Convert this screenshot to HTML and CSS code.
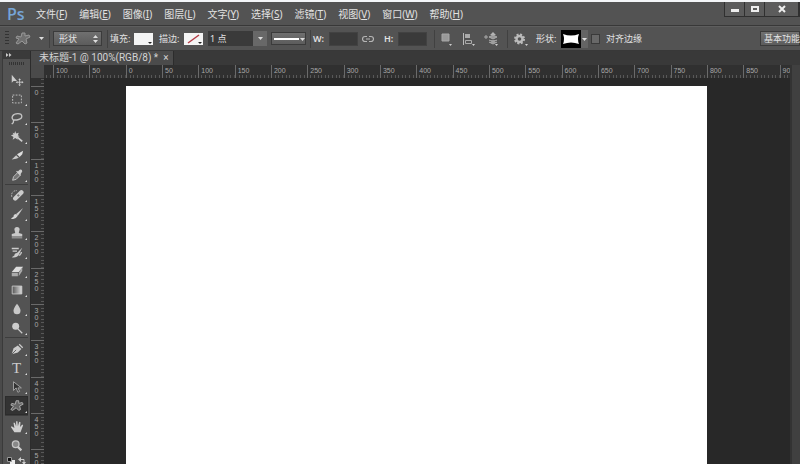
FILE: index.html
```html
<!DOCTYPE html>
<html lang="zh-CN">
<head>
<meta charset="utf-8">
<title>未标题-1</title>
<link rel="stylesheet" href="styles.css">
</head>
<body>
<header class="menubar">
  <span class="logo">Ps</span>
  <nav class="menus">
    <a href="#">文件(<u>F</u>)</a>
    <a href="#">编辑(<u>E</u>)</a>
    <a href="#">图像(<u>I</u>)</a>
    <a href="#">图层(<u>L</u>)</a>
    <a href="#">文字(<u>Y</u>)</a>
    <a href="#">选择(<u>S</u>)</a>
    <a href="#">滤镜(<u>T</u>)</a>
    <a href="#">视图(<u>V</u>)</a>
    <a href="#">窗口(<u>W</u>)</a>
    <a href="#">帮助(<u>H</u>)</a>
  </nav>
  <div class="window-buttons">
    <button aria-label="最小化"><svg width="10" height="8"><path d="M1 4h8v3H1z" fill="#eee"/></svg></button>
    <button aria-label="最大化"><svg width="10" height="8"><path d="M2 2h6v4H2z" fill="none" stroke="#eee" stroke-width="2"/></svg></button>
    <button class="close" aria-label="关闭"><svg width="10" height="8"><path d="M2 1l6 6M8 1L2 7" stroke="#eee" stroke-width="2"/></svg></button>
  </div>
</header>

<section class="options">
  <span class="grip"></span>
  <button class="plain" aria-label="自定形状工具"><svg width="16" height="16" viewBox="0 0 16 16"><path d="M2 5l4 1 1-4 3 0 0 3 4-1 1 2-4 2 1 4-2 1-3-3-4 3-2-1 3-4-3-1z" fill="#707070" stroke="#989898"/></svg></button>
  <button class="plain" aria-label="工具预设"><svg width="5" height="3"><path d="M0 0h5L2.500 3z" fill="#ddd"/></svg></button>
  <span class="divider"></span>
  <div class="mode">
    <select aria-label="工具模式"><option>形状</option></select>
    <svg width="5" height="8"><path d="M0 3h5L2.500 0zM0 5h5L2.500 8z" fill="#ddd"/></svg>
  </div>
  <span class="divider"></span>
  <span>填充:</span>
  <button class="swatch" aria-label="填充"><svg width="19" height="12"><path d="M14 9h4l-2 2z" fill="#222"/></svg></button>
  <span>描边:</span>
  <button class="swatch" aria-label="描边"><svg width="19" height="12"><path d="M4 10L15 2" stroke="#b43c46" stroke-width="1.500"/><path d="M14 9h4l-2 2z" fill="#222"/></svg></button>
  <div class="stroke-size">
    <input aria-label="描边宽度" value="1 点">
    <button aria-label="选择宽度"><svg width="5" height="3"><path d="M0 0h5L2.500 3z" fill="#ddd"/></svg></button>
  </div>
  <button class="raised" aria-label="描边类型"><svg width="32" height="8"><path d="M1 4h25" stroke="#fff" stroke-width="2"/><path d="M27 3h5l-2.500 3z" fill="#ddd"/></svg></button>
  <span class="divider"></span>
  <label class="size-label" for="w">W:</label>
  <input class="size" id="w">
  <button class="plain" aria-label="链接宽高"><svg width="12" height="8" viewBox="0 0 12 8"><path d="M5 1.500H3a2.500 2.500 0 0 0 0 5h2M7 1.500h2a2.500 2.500 0 0 1 0 5H7M4 4h4" fill="none" stroke="#b5b5b5" stroke-width="1.200"/></svg></button>
  <label class="size-label" for="h">H:</label>
  <input class="size" id="h">
  <span class="divider"></span>
  <button class="plain" aria-label="路径操作"><svg width="16" height="16"><path d="M3 3h7v7H3z" fill="#999" stroke="#a8a8a8"/><path d="M10 13h3l-1.500 2z" fill="#ccc"/></svg></button>
  <button class="plain" aria-label="路径对齐方式"><svg width="16" height="16"><path d="M2.500 2v12" stroke="#bbb"/><path d="M4 3h5v4H4z" fill="#aaa"/><path d="M4.500 9.500h6v3h-6z" fill="none" stroke="#aaa"/><path d="M11 13h3l-1.500 2z" fill="#ccc"/></svg></button>
  <button class="plain" aria-label="路径排列方式"><svg width="16" height="16"><path d="M1 6h4M3 4v4" stroke="#aaa"/><path d="M10 1l3 3h-2v2H9V4H7z" fill="#b5b5b5"/><path d="M6 6l4-2 4 2-4 2zM6 9l4 2 4-2M6 11l4 2 4-2" fill="#999" stroke="#aaa"/><path d="M12 13h3l-1.500 2z" fill="#ccc"/></svg></button>
  <span class="divider"></span>
  <button class="plain" aria-label="设置"><svg width="16" height="16" viewBox="0 0 16 16"><circle cx="7.500" cy="8" r="4.500" fill="none" stroke="#bbb" stroke-width="2" stroke-dasharray="2 1.534"/><circle cx="7.500" cy="8" r="3" fill="none" stroke="#bbb" stroke-width="2.400"/><path d="M13 13h3l-1.500 2z" fill="#ccc"/></svg></button>
  <span>形状:</span>
  <button class="shape-picker" aria-label="选择形状"><svg width="20" height="18"><path d="M0 0h20v18H0z" fill="#000"/><path d="M2 4q8 3 16 0-2 5 0 10-8-3-16 0 2-5 0-10z" fill="#fff"/></svg><svg width="7" height="18"><path d="M1 8h5l-2.500 3z" fill="#ddd"/></svg></button>
  <input type="checkbox" id="align">
  <label for="align">对齐边缘</label>
  <button class="raised workspace-name">基本功能</button>
</section>

<main class="workspace">
  <aside class="tools">
    <div class="tools-head"><svg width="6" height="4"><path d="M0 0l2.500 2L0 4zM3 0l2.500 2L3 4z" fill="#ccc"/></svg></div>
    <div class="tools-panel">
      <span class="tools-grip"></span>
      <button class="tool single" aria-label="移动"><svg viewBox="0 0 16 16"><path d="M2 2v9l2-2h4z" fill="#ccc"/><path d="M8 10.500h6M11 7.500v6" stroke="#ccc"/><path d="M11 6l1.500 2h-3zM11 15l1.500-2h-3zM6.500 10.500l2-1.500v3zM15.500 10.500l-2-1.500v3z" fill="#ccc"/></svg></button>
      <button class="tool" aria-label="选框"><svg viewBox="0 0 16 16"><path d="M3 3.500h10v9H3z" fill="none" stroke="#ccc" stroke-dasharray="2 1.500"/></svg></button>
      <button class="tool" aria-label="套索"><svg viewBox="0 0 16 16"><path d="M5 11C0 8 3 3 9 3c6 0 6 6 0 7-4 1-6-1-5 2 0 2-1 2-2 3" fill="none" stroke="#c5c5c5" stroke-width="1.500"/></svg></button>
      <button class="tool" aria-label="魔棒"><svg viewBox="0 0 16 16"><path d="M8 8l6 5" stroke="#ccc" stroke-width="2"/><path d="M6 1l1 3 3-1-1 3 2 1-3 1 1 3-3-2-3 2 1-3-3-2 3-1-1-2 2 1z" fill="#ccc"/></svg></button>
      <button class="tool" aria-label="切片"><svg viewBox="0 0 16 16"><path d="M2 12l5-5 3 3-3 1z" fill="#c8c8c8"/><path d="M8 6l7-4-1 4-3 3z" fill="#ddd"/></svg></button>
      <button class="tool" aria-label="吸管"><svg viewBox="0 0 16 16"><path d="M3 14l1-4 5-5 3 3-5 5z" fill="#777" stroke="#ccc"/><path d="M8 3l1 1 2-2q3-1 3 2l-2 3 0 2-5-5z" fill="#ccc"/></svg></button>
      <hr>
      <button class="tool" aria-label="修复画笔"><svg viewBox="0 0 16 16"><path d="M6 12l7-7" stroke="#ccc" stroke-width="5" stroke-linecap="round"/><path d="M8 8.500h3M9.500 7v3" stroke="#777"/><path d="M2 10q-1-7 6-7" fill="none" stroke="#ccc" stroke-dasharray="1.500 1"/></svg></button>
      <button class="tool" aria-label="画笔"><svg viewBox="0 0 16 16"><path d="M15 1L7 8l2 2z" fill="#ccc"/><path d="M7 8q-3 0-3 3l-3 2q5 2 8-3z" fill="#d5d5d5"/></svg></button>
      <button class="tool" aria-label="仿制图章"><svg viewBox="0 0 16 16"><path d="M6 8L5 4q0-3 3-3t3 3l-1 4 4 1v3H2V9zM2 13h12v1H2z" fill="#c8c8c8"/></svg></button>
      <button class="tool" aria-label="历史记录画笔"><svg viewBox="0 0 16 16"><path d="M14 3L8 9q-3 0-3 3l-3 2q6 1 8-3z" fill="#ccc"/><path d="M2 4h8M3 7h5M10 12q3-1 3-4" fill="none" stroke="#ccc" stroke-width="1.500"/></svg></button>
      <button class="tool" aria-label="橡皮擦"><svg viewBox="0 0 16 16"><path d="M2 9l5-6h8l-5 6z" fill="#ddd"/><path d="M2 10h7v4H2zM10 10l4-6v4l-4 6z" fill="#aaa"/></svg></button>
      <button class="tool" aria-label="渐变"><svg viewBox="0 0 16 16"><defs><linearGradient id="fade"><stop stop-color="#555"/><stop offset="1" stop-color="#ddd"/></linearGradient></defs><path d="M2.500 3.500h11v9h-11z" fill="url(#fade)" stroke="#ccc"/></svg></button>
      <button class="tool" aria-label="模糊"><svg viewBox="0 0 16 16"><path d="M8 2q4 5 4 8a4 4 0 0 1-8 0q0-3 4-8z" fill="#c8c8c8"/></svg></button>
      <button class="tool" aria-label="减淡"><svg viewBox="0 0 16 16"><circle cx="6.500" cy="6" r="4" fill="#ccc"/><path d="M9 9l5 5" stroke="#ccc" stroke-width="1.500"/></svg></button>
      <hr class="wide">
      <button class="tool" aria-label="钢笔"><svg viewBox="0 0 16 16"><path d="M2 14L4 7l5-3 4 4-4 4z" fill="#ccc"/><path d="M2 14l5-5" stroke="#555"/><path d="M10 3l1-1 4 4-1 1z" fill="#ccc"/></svg></button>
      <button class="tool type" aria-label="文字">T</button>
      <button class="tool" aria-label="路径选择"><svg viewBox="0 0 16 16"><path d="M4 2v10l3-3 2 5 2-1-2-4h4z" fill="#333" stroke="#aaa"/></svg></button>
      <button class="tool active" aria-label="自定形状"><svg viewBox="0 0 16 16"><path d="M2 5l4 1 1-4 3 0 0 3 4-1 1 2-4 2 1 4-2 1-3-3-4 3-2-1 3-4-3-1z" fill="#666" stroke="#b5b5b5"/></svg></button>
      <hr class="wide">
      <button class="tool" aria-label="抓手"><svg viewBox="0 0 16 16"><path d="M5 14L1 8l1-1 3 2-1-6 1.500 0L7 7V1.500h1.500L9 7l1.500-5 1.500.5L11.500 8 14 5l1 1-3 8z" fill="#d0d0d0"/></svg></button>
      <button class="tool single" aria-label="缩放"><svg viewBox="0 0 16 16"><circle cx="6.500" cy="6" r="3.800" fill="#888" stroke="#c5c5c5" stroke-width="1.500"/><path d="M9 9l4 4" stroke="#ccc" stroke-width="2.500"/></svg></button>
      <div class="color-modes">
        <button aria-label="默认颜色"><svg width="8" height="8"><path d="M3 3h5v5H3z" fill="#eee"/><path d="M.5.5h4v4h-4z" fill="#111" stroke="#999"/></svg></button>
        <button aria-label="切换颜色"><svg width="8" height="8"><path d="M2 2.500h4v4" fill="none" stroke="#ccc"/><path d="M3 0v5L0 2.500zM4 5h4L6 8z" fill="#ccc"/></svg></button>
      </div>
    </div>
  </aside>

  <section class="document">
    <div class="tabs"><div class="tab"><span>未标题-1 @ 100%(RGB/8) *</span><button aria-label="关闭文档">×</button></div></div>
    <div class="view">
      <div class="corner"></div>
      <div class="ruler across">
        <span></span><span>100</span><span>50</span><span>0</span><span>50</span><span>100</span><span>150</span><span>200</span><span>250</span><span>300</span><span>350</span><span>400</span><span>450</span><span>500</span><span>550</span><span>600</span><span>650</span><span>700</span><span>750</span><span>800</span><span>850</span><span>900</span>
      </div>
      <div class="scrollbar"></div>
      <div class="ruler down">
        <span></span><span>0</span><span>50</span><span>100</span><span>150</span><span>200</span><span>250</span><span>300</span><span>350</span><span>400</span><span>450</span><span>50</span>
      </div>
      <div class="stage"><div class="artboard"></div></div>
    </div>
  </section>
</main>
</body>
</html>
```
FILE: styles.css
```css
:root {
  --unit: calc(109px / 3);
  --minor: calc(109px / 30);
  --panel: #535353;
  --edge: #383838;
  --tick: #585858;
}

* { box-sizing: border-box; }

body {
  margin: 0;
  height: 100vh;
  display: flex;
  flex-direction: column;
  overflow: hidden;
  border-top: 2px solid #f4f6f8;
  background: #282828;
  color: #e2e2e2;
  font: 9px/12px "Noto Sans", "Noto Sans CJK SC", sans-serif;
}

button, input, select {
  margin: 0;
  padding: 0;
  border: 0;
  border-radius: 0;
  background: none;
  color: inherit;
  font: inherit;
}

button {
  display: flex;
  align-items: center;
  justify-content: center;
}

svg { display: block; flex: none; }

/* Menu bar */
.menubar {
  flex: none;
  display: flex;
  align-items: center;
  height: 24px;
  padding-left: 7px;
  background: var(--panel);
  border-bottom: 1px solid var(--edge);
}

.logo {
  width: 29px;
  color: #76a5d8;
  font: 600 16px/20px "Open Sans", sans-serif;
}

.menus {
  display: flex;
  gap: 12px;
  font-size: 10px;
  white-space: nowrap;
}

.menus a { color: #e2e2e2; text-decoration: none; }

.window-buttons {
  display: flex;
  align-self: flex-start;
  margin-left: auto;
  border: 1px solid #303030;
  border-top: 0;
}

.window-buttons button {
  width: 20px;
  height: 14px;
  background: #5c5c5c;
  border-right: 1px solid #303030;
}

.window-buttons .close { width: 34px; }

/* Options bar */
.options {
  flex: none;
  display: grid;
  grid-template-columns:
    12px 20px 12px 6px 52px 5px
    24px 25px 25px 24px 63px 37px 5px
    16px 33px 22px 14px 34px 7px
    22px 22px 22px 7px
    24px 25px 30px 15px 1fr 52px;
  align-items: center;
  height: 25px;
  padding-left: 3px;
  background: var(--panel);
  border-top: 1px solid #5e5e5e;
  border-bottom: 1px solid var(--edge);
  white-space: nowrap;
}

.grip {
  width: 4px;
  height: 15px;
  margin-left: 2px;
  background: repeating-linear-gradient(#333 0 1px, transparent 1px 3px);
}

.divider {
  width: 1px;
  height: 18px;
  margin-left: 2px;
  background: #414141;
}

.plain { justify-self: start; min-width: 12px; }

.mode {
  display: flex;
  align-items: center;
  justify-content: space-between;
  width: 49px;
  height: 15px;
  padding: 0 3px 0 5px;
  border: 1px solid #3b3b3b;
  background: linear-gradient(#707070, #5c5c5c);
}

.mode select { appearance: none; width: 30px; }

.swatch {
  width: 19px;
  height: 12px;
  background: #f4f4f4;
}

.stroke-size { display: flex; width: 59px; height: 15px; }

.stroke-size input {
  width: 45px;
  padding-left: 2px;
  background: #3a3a3a;
}

.stroke-size button { width: 14px; background: #686868; }

.raised {
  width: 35px;
  height: 13px;
  border: 1px solid #3b3b3b;
  background: linear-gradient(#707070, #5c5c5c);
}

.size-label { font-weight: 600; }

.size {
  width: 29px;
  height: 14px;
  background: #3a3a3a;
  border: 1px solid #424242;
}

.shape-picker { width: 27px; background: #646464; }

.options input[type="checkbox"] {
  appearance: none;
  width: 9px;
  height: 10px;
  border: 1px solid #3a3a3a;
  background: #686868;
}

.workspace-name {
  justify-content: flex-start;
  width: auto;
  height: 15px;
  margin-left: 12px;
  padding-left: 3px;
}

/* Workspace */
.workspace {
  flex: 1;
  min-height: 0;
  display: flex;
}

.tools {
  flex: none;
  width: 31px;
  border-left: 2px solid #4a4a4a;
  border-right: 1px solid #2c2c2c;
  background: #3a3a3a;
}

.tools-head { height: 8px; padding: 2px 4px; }

.tools-panel {
  display: flex;
  flex-direction: column;
  margin-left: 1px;
  padding: 0 2px;
  background: var(--panel);
}

.tools-grip {
  height: 3px;
  margin: 3px 4px 5px;
  background: repeating-linear-gradient(90deg, #333 0 1px, transparent 1px 2px);
}

.tools hr {
  width: 100%;
  height: 1px;
  margin: 0;
  border: 0;
  background: #3d3d3d;
}

.tools hr.wide { margin-bottom: 1px; }

.tool {
  position: relative;
  height: 19px;
}

.tool svg { width: 14px; height: 14px; }

.tool::after {
  content: "";
  position: absolute;
  right: 1px;
  bottom: 2px;
  border: 1px solid #ddd;
  border-left-color: transparent;
  border-top-color: transparent;
}

.tool.single::after { display: none; }

.tool.active { background: #333; outline: 1px solid #2c2c2c; outline-offset: -1px; }

.tool.type { color: #ccc; font: 15px/18px "Liberation Serif", serif; }

.color-modes { display: flex; justify-content: space-around; height: 12px; }

/* Document */
.document {
  flex: 1;
  min-width: 0;
  display: flex;
  flex-direction: column;
}

.tabs {
  flex: none;
  display: flex;
  height: 14px;
  background: #393939;
}

.tab {
  display: flex;
  align-items: center;
  gap: 5px;
  padding: 0 4px 0 8px;
  background: #4b4b4b;
  border-right: 1px solid #2c2c2c;
  color: #d4d4d4;
  font-family: Roboto, "Noto Sans CJK SC", sans-serif;
  font-size: 10px;
  white-space: nowrap;
}

.view {
  flex: 1;
  min-height: 0;
  display: grid;
  grid-template: 13px minmax(0, 1fr) / 13px minmax(0, 1fr) 10px;
}

.corner { background: #4a4a4a; }

.scrollbar {
  grid-area: 1 / 3 / 3 / 4;
  background: #404040;
  border-left: 2px solid #333;
}

.ruler {
  display: flex;
  overflow: hidden;
  background: #303030;
  color: #a8a8a8;
  font: 7px/8px "Liberation Sans", sans-serif;
}

.ruler span { flex: none; }

.across span {
  width: var(--unit);
  padding: 2px 0 0 2px;
  border-left: 1px solid #6a6a6a;
  background: repeating-linear-gradient(90deg, transparent 0 calc(var(--minor) - 1px), var(--tick) calc(var(--minor) - 1px) var(--minor)) bottom / 100% 3px no-repeat;
}

.across span:first-child { margin-left: calc(9px - var(--unit)); }

.down { flex-direction: column; }

.down span {
  height: var(--unit);
  padding: 2px 0 0 1px;
  border-top: 1px solid #6a6a6a;
  background: repeating-linear-gradient(transparent 0 calc(var(--minor) - 1px), var(--tick) calc(var(--minor) - 1px) var(--minor)) right / 3px 100% no-repeat;
  writing-mode: vertical-lr;
  text-orientation: upright;
}

.down span:first-child { margin-top: calc(8px - var(--unit)); }

.stage {
  display: flex;
  padding: 8px 83px 0 82px;
  background: #282828;
}

.artboard { flex: 1; background: #fff; }
```
